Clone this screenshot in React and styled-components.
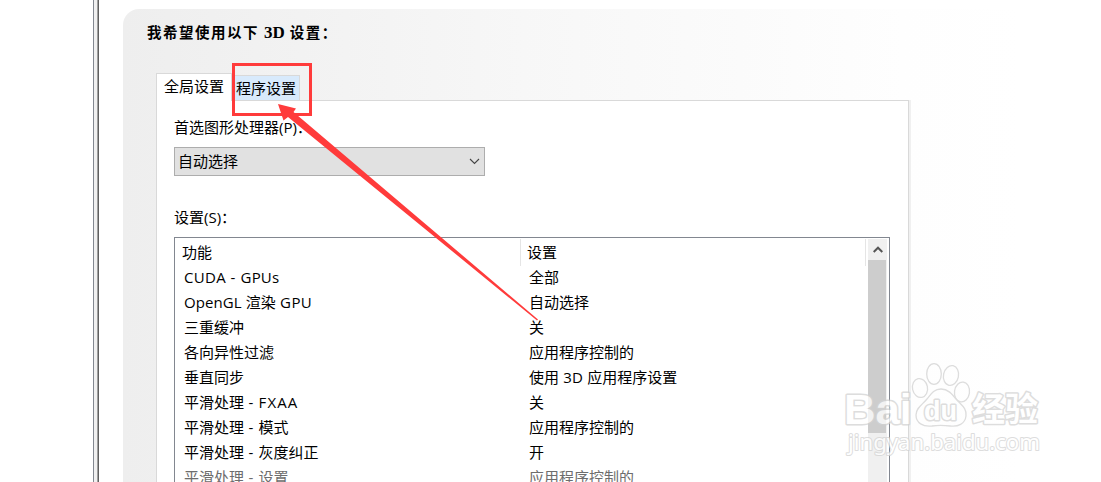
import React from 'react';
import styled, { createGlobalStyle } from 'styled-components';

const Global = createGlobalStyle`
  * { box-sizing: border-box; }
  body { margin: 0; background: #fff; overflow: hidden; }
`;

const Window = styled.div`
  position: relative;
  display: flex;
  width: 1101px;
  height: 482px;
  overflow: hidden;
  background: #fff;
  color: #000;
  font: 15px/25px "Open Sans", "Noto Sans CJK SC", sans-serif;
  white-space: nowrap;
`;

const Splitter = styled.div`
  flex: none;
  width: 6px;
  margin-left: 93px;
  border-left: 1px solid #828790;
  border-right: 1px solid #5f5f5f;
  background: linear-gradient(to right, #f0f0f0 3px, #a0a0a0 3px);
`;

const Panel = styled.main`
  flex: 1;
  display: flex;
  flex-direction: column;
  margin: 9px 0 0 24px;
  padding: 11px 0 0 33px;
  border-top-left-radius: 16px;
  background: linear-gradient(to right, #eee 0, #f7f7f7 400px, #fefefe 780px, #fff 900px);
`;

const Heading = styled.h1`
  flex: none;
  display: flex;
  margin: 0 0 0 -9px;
  height: 53px;
  font: 700 14.5px/24px "Noto Sans CJK SC", sans-serif;
  letter-spacing: 1.5px;
`;

const HeadingLatin = styled.span`
  margin: 0 5px;
  font-family: "Liberation Serif", serif;
  font-size: 17px;
  line-height: 25px;
  letter-spacing: 0;
`;

const TabStrip = styled.div`
  flex: none;
  display: flex;
  align-items: flex-end;
  height: 27px;
`;

const Tab = styled.button`
  position: relative;
  z-index: 1;
  width: ${p => (p.$active ? 76 : 68)}px;
  height: ${p => (p.$active ? 28 : 25)}px;
  margin-bottom: ${p => (p.$active ? -1 : 0)}px;
  padding: 0 0 ${p => (p.$active ? 3 : 0)}px ${p => (p.$active ? 7 : 4)}px;
  border: 1px solid #d9d9d9;
  border-bottom: 0;
  border-left-width: ${p => (p.$active ? 1 : 0)}px;
  background: ${p => (p.$active ? '#fff' : '#d8eafc')};
  font: inherit;
  line-height: 24px;
  color: inherit;
  text-align: left;
`;

const TabPane = styled.section`
  flex: none;
  height: 390px;
  width: 753px;
  padding: 14px 0 0 17px;
  border: 1px solid #d9d9d9;
  border-bottom: 0;
  background: #fff;
  box-shadow: 2px 0 0 #f0f0f0;
`;

const Label = styled.div`
  height: 32px;
`;

const Select = styled.div`
  display: flex;
  align-items: center;
  justify-content: space-between;
  width: 311px;
  height: 29px;
  margin-bottom: 29px;
  padding: 0 4px 0 3px;
  border: 1px solid #adadad;
  background: #e1e1e1;
`;

const ListBox = styled.div`
  display: flex;
  width: 716px;
  height: 260px;
  border: 1px solid #828790;
  padding: 1px 2px 0 0;
`;

const Table = styled.div`
  width: 691px;
`;

const Row = styled.div`
  display: grid;
  grid-template-columns: ${p => (p.$head ? '346px 345px' : '345px 346px')};
  height: ${p => (p.$head ? 26 : 25)}px;
  line-height: ${p => (p.$head ? 27 : 25)}px;
  padding-left: ${p => (p.$head ? 0 : 2)}px;
  color: ${p => (p.$disabled ? '#6d6d6d' : '#000')};
`;

const Cell = styled.span`
  padding-left: 7px;
  border-right: ${p => (p.$head ? '1px solid #e5e5e5' : '0')};

  &:last-child {
    padding-left: ${p => (p.$head ? 6 : 7)}px;
  }
`;

const Latin = styled.span`
  letter-spacing: ${p => p.$gap}px;
`;

const Scrollbar = styled.div`
  width: 20px;
  margin-left: 2px;
  background: linear-gradient(to right, #f0f0f0 19px, #fff 19px);
`;

const ScrollButton = styled.div`
  display: flex;
  justify-content: center;
  align-items: center;
  height: 21px;
`;

const Thumb = styled.div`
  height: 173px;
  margin-right: 1px;
  background: #cdcdcd;
`;

const Overlay = styled.svg`
  position: absolute;
  inset: 0;
  z-index: 3;
  pointer-events: none;
`;

const Mark = styled.g`
  opacity: 0.75;
  fill: #fff;
  stroke: #d2d2d2;
  stroke-width: 1.3px;
`;

const MarkText = styled.text`
  font-family: ${p => p.$family}, "Noto Sans CJK SC", sans-serif;
  font-size: ${p => p.$size}px;
  font-weight: ${p => p.$weight || 700};
  stroke-width: ${p => p.$stroke || 3}px;
  paint-order: stroke;
  stroke-linejoin: round;
`;

const rows = [
  ['CUDA - GPUs', '全部'],
  ['OpenGL 渲染 GPU', '自动选择'],
  ['三重缓冲', '关'],
  ['各向异性过滤', '应用程序控制的'],
  ['垂直同步', '使用 3D 应用程序设置'],
  ['平滑处理 - FXAA', '关'],
  ['平滑处理 - 模式', '应用程序控制的'],
  ['平滑处理 - 灰度纠正', '开'],
  ['平滑处理 - 设置', '应用程序控制的', true],
];

const gaps = { ' - ': 0.65, FXAA: 1.1, CUDA: 0.3, GPUs: 0.2, 'OpenGL ': 0.1, ' GPU': 0.4, ' 3D ': 0.25 };

// Tracks each Latin run separately so that the Chinese glyphs keep their pitch.
function MixedText({ children }) {
  return children
    .split(/( - |FXAA|CUDA|GPUs|OpenGL | GPU| 3D )/)
    .filter(Boolean)
    .map((run, i) => (gaps[run] ? <Latin key={i} $gap={gaps[run]}>{run}</Latin> : run));
}

function Watermark() {
  return (
    <Mark>
      <MarkText x="844" y="424" $family="Liberation Sans" $size={43} textLength="68" lengthAdjust="spacingAndGlyphs">Bai</MarkText>
      <ellipse cx="920" cy="388" rx="7.5" ry="9.5" transform="rotate(-12 920 388)" />
      <ellipse cx="934" cy="374" rx="7.3" ry="10.3" />
      <ellipse cx="951" cy="375.5" rx="7.5" ry="10" transform="rotate(12 951 375.5)" />
      <ellipse cx="962" cy="392" rx="7.5" ry="10" transform="rotate(8 962 392)" />
      <path d="M941 389c7 0 11 5 15 10 5 6 11 9 10 17-1 8-8 11-16 10-7-1-12-1-18 0-9 1-16-3-16-11 0-7 6-10 11-16 4-5 7-10 14-10z" />
      <MarkText x="924" y="420" $family="Liberation Sans" $size={27} textLength="33" lengthAdjust="spacingAndGlyphs">du</MarkText>
      <MarkText x="972" y="421" $family="Noto Sans CJK SC" $size={33} textLength="66">经验</MarkText>
      <MarkText x="848" y="450" $family="Noto Sans" $size={22} $weight={400} $stroke={2} textLength="192" lengthAdjust="spacingAndGlyphs">jingyan.baidu.com</MarkText>
    </Mark>
  );
}

export default function App() {
  return (
    <>
      <Global />
      <Window>
        <Splitter />
        <Panel>
          <Heading>我希望使用以下<HeadingLatin>3D</HeadingLatin>设置：</Heading>
          <TabStrip>
            <Tab $active>全局设置</Tab>
            <Tab>程序设置</Tab>
          </TabStrip>
          <TabPane>
            <Label>首选图形处理器(P)：</Label>
            <Select>
              自动选择
              <svg width="11" height="7" viewBox="0 0 11 7" fill="none" stroke="#444" strokeWidth="1.1">
                <path d="M1 1l4.500 4.500L10 1" />
              </svg>
            </Select>
            <Label>设置(S)：</Label>
            <ListBox>
              <Table>
                <Row $head><Cell $head>功能</Cell><Cell $head>设置</Cell></Row>
                {rows.map(([name, value, disabled]) => (
                  <Row key={name} $disabled={disabled}>
                    <Cell><MixedText>{name}</MixedText></Cell>
                    <Cell><MixedText>{value}</MixedText></Cell>
                  </Row>
                ))}
              </Table>
              <Scrollbar>
                <ScrollButton>
                  <svg width="10" height="8" viewBox="0 0 10 8" fill="none" stroke="#555" strokeWidth="2">
                    <path d="M.7 6L5 1.700 9.300 6" />
                  </svg>
                </ScrollButton>
                <Thumb />
              </Scrollbar>
            </ListBox>
          </TabPane>
        </Panel>
        <Overlay width="1101" height="482">
          <Watermark />
          <rect x="233.5" y="64.5" width="77" height="50" fill="none" stroke="#ff3b3b" strokeWidth="3" />
          <path d="M278 104L296 108.5 293.5 112 538 319.5 537 320.5 288 117 283.5 120.5z" fill="#ff3b3b" />
        </Overlay>
      </Window>
    </>
  );
}
